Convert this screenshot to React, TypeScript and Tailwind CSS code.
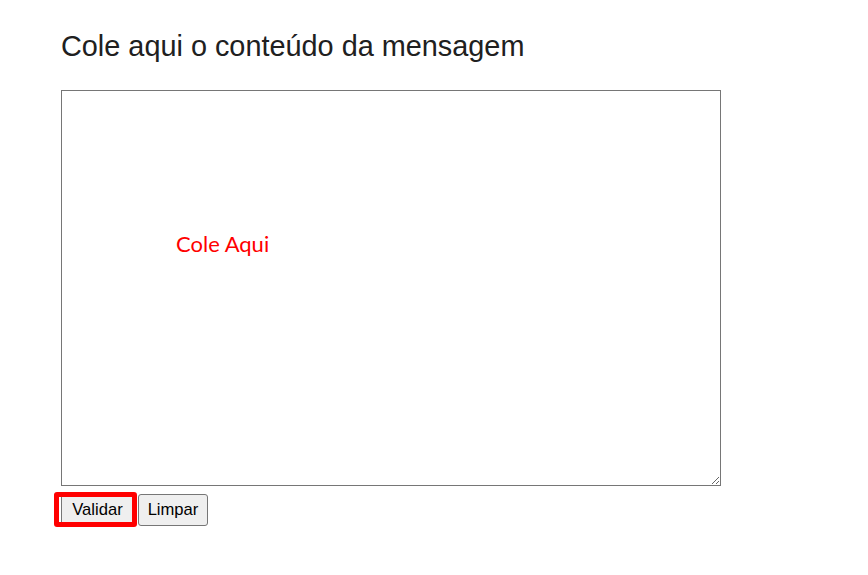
import React from "react";

const App = () => {
  return (
    <div className="min-h-[575px] bg-white pl-[61px] pt-[30px]" style={{ fontFamily: '"Liberation Sans", Arial, sans-serif' }}>
      <h1 className="text-[28.85px] leading-[33px] text-[#202020] font-normal">
        Cole aqui o conteúdo da mensagem
      </h1>
      <textarea
        placeholder="Cole Aqui"
        className="mt-[27px] block w-[660px] h-[396px] border border-[#767676] pl-[114px] pt-[139px] text-[22px] leading-[28px] outline-none resize placeholder:text-[#ff0000]"
        style={{ fontFamily: 'Lato, "Noto Sans", sans-serif' }}
      />
      <div className="mt-[8px] flex gap-[4px]">
        <div className="relative">
          <button className="h-[32px] w-[73px] rounded-[3px] border border-[#767676] bg-[#efefef] text-[16.6px] text-black">
            Validar
          </button>
          <div className="pointer-events-none absolute -left-[7px] -top-[2px] -right-[3px] -bottom-[1px] rounded-[3px] border-[5px] border-[#ff0000]" />
        </div>
        <button className="h-[32px] w-[70px] rounded-[3px] border border-[#767676] bg-[#efefef] text-[16.6px] text-black">
          Limpar
        </button>
      </div>
    </div>
  );
};

export default App;
